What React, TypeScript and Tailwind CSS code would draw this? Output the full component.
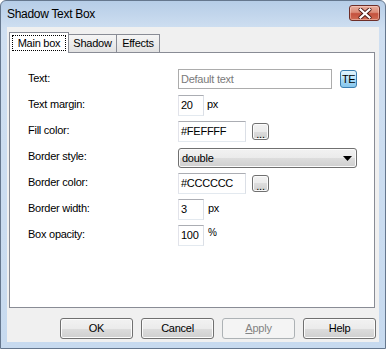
import React from "react";

const inputCls =
  "box-border border border-[#abadb3] border-l-[#e2e3ea] border-r-[#dbdfe6] border-b-[#e3e9ef] bg-white flex items-center pl-[2px] text-black";

function Label({ children }: { children: React.ReactNode }) {
  return <div className="w-[150px] pt-[3px] leading-[13px] shrink-0">{children}</div>;
}

function DotsButton() {
  return (
    <div className="ml-[6px] mt-[2px] w-[17px] h-[17px] box-border rounded-[3px] border border-[#707070] bg-[linear-gradient(to_bottom,#f2f2f2,#ebebeb_50%,#dddddd_50%,#cfcfcf)] shadow-[inset_0_0_0_1px_#fbfbfb] flex items-end justify-center pb-[1px] leading-[8px] text-[11px] text-black">
      ...
    </div>
  );
}

function Btn({ children, disabled }: { children: React.ReactNode; disabled?: boolean }) {
  return (
    <div
      className={
        disabled
          ? "w-[73px] h-[21px] box-border rounded-[3px] border border-[#adb2b5] bg-[#f4f4f4] flex items-center justify-center text-[#838383]"
          : "w-[73px] h-[21px] box-border rounded-[3px] border border-[#707070] bg-[linear-gradient(to_bottom,#f2f2f2,#ebebeb_50%,#dddddd_50%,#cfcfcf)] shadow-[inset_0_0_0_1px_#fbfbfb] flex items-center justify-center text-black"
      }
    >
      {children}
    </div>
  );
}

export default function App() {
  return (
    <div className="w-[386px] h-[349px] box-border flex flex-col border border-[#65778e] rounded-t-[6px] bg-[linear-gradient(to_bottom,#b6cde7,#cfdff1_28px,#c7daef)] font-['Liberation_Sans',Arial,sans-serif] text-[11px] tracking-[-0.25px] text-black overflow-hidden">
      {/* Title bar */}
      <div className="h-[26px] shrink-0 flex items-start">
        <div className="pl-[6px] pt-[5px] text-[12px] leading-[16px] tracking-[-0.3px] text-black flex-1">
          Shadow Text Box
        </div>
        <div className="mt-[4px] mr-[5px] w-[31px] h-[16px] box-border rounded-[3px] border border-[#6e2e28] bg-[linear-gradient(to_bottom,#e8ae9e,#dc8c78_45%,#c4513e_55%,#cf6c54)] shadow-[inset_0_0_0_1px_rgba(255,220,210,0.45)] flex items-center justify-center">
          <svg width="14" height="11" viewBox="0 0 14 11">
            <path d="M2.5 1.5 L11.5 9.5 M11.5 1.5 L2.5 9.5" stroke="#4a1a16" strokeWidth="4" strokeLinecap="round" />
            <path d="M2.5 1.5 L11.5 9.5 M11.5 1.5 L2.5 9.5" stroke="#ffffff" strokeWidth="2.2" strokeLinecap="square" />
          </svg>
        </div>
      </div>

      {/* Client area */}
      <div className="mx-[6px] mb-[6px] flex-1 bg-[#f0f0f0] flex flex-col">
        <div className="ml-[2px] mr-[4px] mt-[5px] flex flex-col">
          {/* Tabs */}
          <div className="flex items-end h-[20px]">
            <div className="relative z-10 -mb-px w-[60px] h-[21px] box-border border border-b-0 border-[#898c95] bg-white flex items-start justify-center pt-[2px]">
              <div className="h-[16px] w-[54px] box-border border border-dotted border-black flex items-center justify-center leading-[13px]">
                Main box
              </div>
            </div>
            <div className="w-[48px] h-[18px] box-border border-t border-r border-[#898c95] bg-[linear-gradient(to_bottom,#f5f5f5,#ececec_50%,#e2e2e2)] flex items-center justify-center leading-[13px]">
              Shadow
            </div>
            <div className="w-[43px] h-[18px] box-border border-t border-r border-[#898c95] bg-[linear-gradient(to_bottom,#f5f5f5,#ececec_50%,#e2e2e2)] flex items-center justify-center leading-[13px]">
              Effects
            </div>
          </div>

          {/* Panel */}
          <div className="h-[256px] box-border border border-[#898c95] bg-white pl-[18px] pt-[16px] flex flex-col gap-[5px]">
            <div className="flex items-start h-[21px]">
              <Label>Text:</Label>
              <div className="w-[154px] h-[20px] box-border border border-[#acacac] bg-white flex items-center pl-[2px] text-[#7a7a7a]">
                Default text
              </div>
              <div className="ml-[8px] mt-[1px] w-[17px] h-[18px] box-border rounded-[3px] border border-[#3c7fb1] bg-[linear-gradient(to_bottom,#e3f4fc,#bde6fd_45%,#a7d9f5_55%,#86c6ec)] flex items-center justify-center text-black tracking-[-0.5px] leading-[13px]">
                TE
              </div>
            </div>

            <div className="flex items-start h-[21px]">
              <Label>Text margin:</Label>
              <div className={`w-[26px] h-[21px] ${inputCls}`}>20</div>
              <div className="ml-[3px] pt-[3px] leading-[13px]">px</div>
            </div>

            <div className="flex items-start h-[21px]">
              <Label>Fill color:</Label>
              <div className={`w-[68px] h-[21px] ${inputCls}`}>#FEFFFF</div>
              <DotsButton />
            </div>

            <div className="flex items-start h-[21px]">
              <Label>Border style:</Label>
              <div className="mt-[1px] w-[179px] h-[20px] box-border rounded-[3px] border border-[#707070] bg-[linear-gradient(to_bottom,#f2f2f2,#ebebeb_50%,#dddddd_50%,#cfcfcf)] shadow-[inset_0_0_0_1px_#fbfbfb] flex items-center pl-[3px] pr-[4px]">
                <span className="flex-1 leading-[13px]">double</span>
                <svg width="9" height="5" viewBox="0 0 9 5">
                  <path d="M0 0 H9 L4.5 5 Z" fill="#000" />
                </svg>
              </div>
            </div>

            <div className="flex items-start h-[21px]">
              <Label>Border color:</Label>
              <div className={`w-[68px] h-[21px] ${inputCls}`}>#CCCCCC</div>
              <DotsButton />
            </div>

            <div className="flex items-start h-[21px]">
              <Label>Border width:</Label>
              <div className={`w-[26px] h-[21px] ${inputCls}`}>3</div>
              <div className="ml-[4px] pt-[3px] leading-[13px]">px</div>
            </div>

            <div className="flex items-start h-[21px]">
              <Label>Box opacity:</Label>
              <div className={`w-[26px] h-[21px] ${inputCls}`}>100</div>
              <div className="ml-[4px] pt-[1px] leading-[13px] text-[10px]">%</div>
            </div>
          </div>
        </div>

        {/* Buttons */}
        <div className="mt-[10px] flex justify-end gap-[8px] pr-[3px]">
          <Btn>OK</Btn>
          <Btn>Cancel</Btn>
          <Btn disabled>
            <span>
              <span className="underline">A</span>pply
            </span>
          </Btn>
          <Btn>Help</Btn>
        </div>
      </div>
    </div>
  );
}
